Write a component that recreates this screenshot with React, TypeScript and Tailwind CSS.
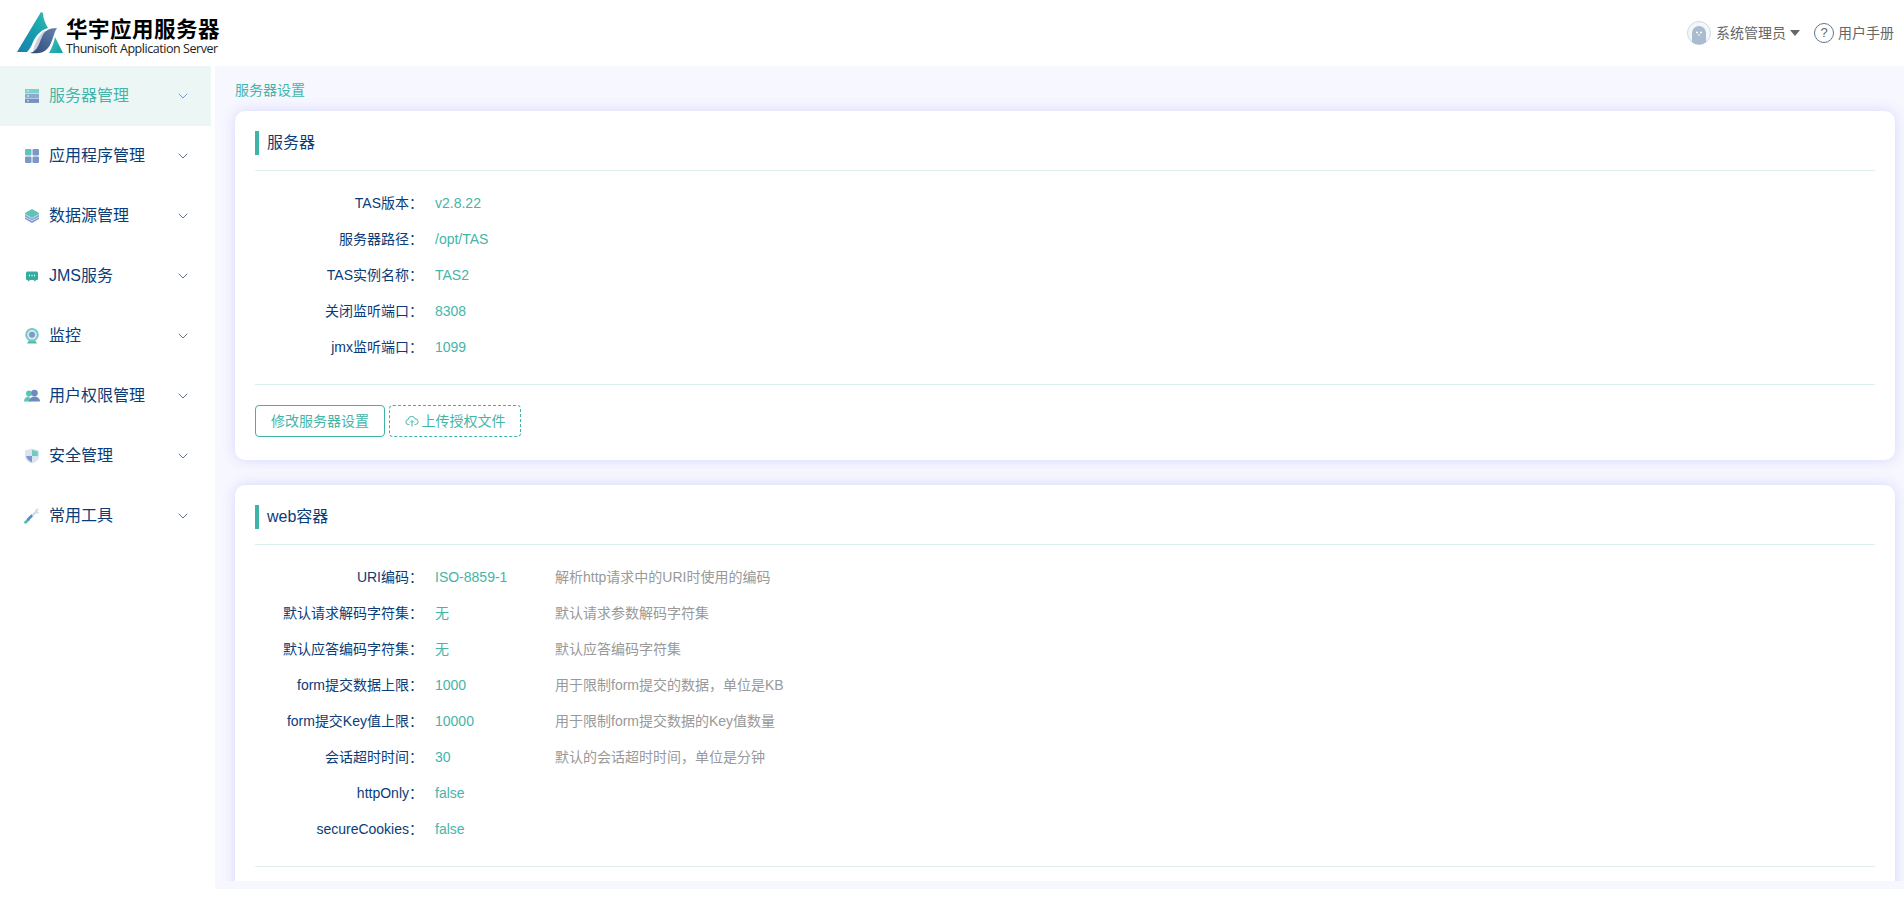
import { ChevronDown } from "lucide-react";

const FONT = "font-['Liberation_Sans','Noto_Sans_CJK_SC',sans-serif]";

const MENU = [
  { label: "服务器管理", icon: "server", active: true },
  { label: "应用程序管理", icon: "apps" },
  { label: "数据源管理", icon: "layers" },
  { label: "JMS服务", icon: "chat" },
  { label: "监控", icon: "camera" },
  { label: "用户权限管理", icon: "users" },
  { label: "安全管理", icon: "shield" },
  { label: "常用工具", icon: "tools" },
];

const SERVER_ROWS = [
  { label: "TAS版本：", value: "v2.8.22" },
  { label: "服务器路径：", value: "/opt/TAS" },
  { label: "TAS实例名称：", value: "TAS2" },
  { label: "关闭监听端口：", value: "8308" },
  { label: "jmx监听端口：", value: "1099" },
];

const WEB_ROWS = [
  { label: "URI编码：", value: "ISO-8859-1", desc: "解析http请求中的URI时使用的编码" },
  { label: "默认请求解码字符集：", value: "无", desc: "默认请求参数解码字符集" },
  { label: "默认应答编码字符集：", value: "无", desc: "默认应答编码字符集" },
  { label: "form提交数据上限：", value: "1000", desc: "用于限制form提交的数据，单位是KB" },
  { label: "form提交Key值上限：", value: "10000", desc: "用于限制form提交数据的Key值数量" },
  { label: "会话超时时间：", value: "30", desc: "默认的会话超时时间，单位是分钟" },
  { label: "httpOnly：", value: "false", desc: "" },
  { label: "secureCookies：", value: "false", desc: "" },
];

function Logo() {
  return (
    <svg width="46" height="46" viewBox="0 0 46 46" className="shrink-0">
      <defs>
        <linearGradient id="lg-a" x1="0" y1="1" x2="1" y2="0">
          <stop offset="0" stopColor="#1b7fb0" />
          <stop offset="0.55" stopColor="#15a0ad" />
          <stop offset="1" stopColor="#35bcb2" />
        </linearGradient>
        <linearGradient id="lg-b" x1="0" y1="1" x2="1" y2="0">
          <stop offset="0" stopColor="#2c4a78" />
          <stop offset="1" stopColor="#6482ab" />
        </linearGradient>
        <linearGradient id="lg-c" x1="0" y1="0" x2="1" y2="1">
          <stop offset="0" stopColor="#45c0b4" />
          <stop offset="1" stopColor="#0f9fa6" />
        </linearGradient>
      </defs>
      <path d="M0 42 L24 2 L26 3 C26 8 28 13 31 18 C24 20 19 25 16 32 C14 37 12 40 10 42 Z" fill="url(#lg-a)" />
      <path d="M38 27 L46 43 L32 43 C35 38 37 32 38 27 Z" fill="url(#lg-c)" />
      <path d="M16 41 C18 35 19 28 27 21 L30 21 C25 26 23 34 20 41 Z" fill="#c9d0e0" />
      <path d="M13 43 C21 41 22 33 25 27 C27 21 32 18 40 18 C36 24 36 32 31 38 C27 43 20 44 13 43 Z" fill="url(#lg-b)" />
    </svg>
  );
}

function MenuIcon({ name }: { name: string }) {
  if (name === "server") {
    return (
      <svg width="16" height="16" viewBox="0 0 16 16">
        <rect x="1" y="1" width="14" height="4.300" fill="#7fd0c6" />
        <rect x="1" y="5.800" width="14" height="4.300" fill="#8fa9d6" />
        <rect x="1" y="10.600" width="14" height="4.300" fill="#7391c2" />
        <path d="M3 3h2M3 8h2M3 12.800h2" stroke="#e8f2f5" strokeWidth="1" />
      </svg>
    );
  }
  if (name === "apps") {
    return (
      <svg width="16" height="16" viewBox="0 0 16 16">
        <rect x="1" y="1" width="6.500" height="6.500" rx="1" fill="#5fc4b8" />
        <rect x="8.500" y="1" width="6.500" height="6.500" rx="1" fill="#7b98c8" />
        <rect x="1" y="8.500" width="6.500" height="6.500" rx="1" fill="#7b98c8" />
        <rect x="8.500" y="8.500" width="6.500" height="6.500" rx="1" fill="#7b98c8" />
      </svg>
    );
  }
  if (name === "layers") {
    return (
      <svg width="16" height="16" viewBox="0 0 16 16">
        <path d="M1 9.500 L8 13 L15 9.500 L15 11 L8 15 L1 11 Z" fill="#7e9bcf" />
        <path d="M1 6.500 L8 10.500 L15 6.500 L15 9 L8 12.500 L1 9 Z" fill="#8ba7d8" />
        <path d="M8 1 L15 5 L15 6 L8 10 L1 6 L1 5 Z" fill="#5fc4b6" />
      </svg>
    );
  }
  if (name === "chat") {
    return (
      <svg width="16" height="16" viewBox="0 0 16 16">
        <path d="M3.500 3.500h9a1.500 1.500 0 0 1 1.500 1.500v6a1 1 0 0 1-1 1h-1l-1 1.500-1.500-1.500H6L4.500 13.500 3.500 12H3a1 1 0 0 1-1-1V5A1.500 1.500 0 0 1 3.500 3.500Z" fill="#35ad9f" />
        <path d="M5 7.500h1M7.500 7.500h1M10 7.500h1" stroke="#ffffff" strokeWidth="1.500" />
      </svg>
    );
  }
  if (name === "camera") {
    return (
      <svg width="16" height="16" viewBox="0 0 16 16">
        <path d="M5.500 11.500 L3 15.500 H13 L10.500 11.500 Z" fill="#4fbcae" />
        <circle cx="8" cy="6.800" r="6.800" fill="#72ccc0" />
        <circle cx="8" cy="6.800" r="4.800" fill="#dce8f2" />
        <circle cx="8" cy="6.800" r="3" fill="#7a9bd0" />
      </svg>
    );
  }
  if (name === "users") {
    return (
      <svg width="16" height="16" viewBox="0 0 16 16">
        <circle cx="5" cy="5.500" r="3" fill="#5fc4b8" />
        <path d="M0 13.500 C0 10 2.500 8.500 5 8.500 L7 13.500 Z" fill="#5fc4b8" />
        <circle cx="10.500" cy="5" r="3.300" fill="#6c8cc0" />
        <path d="M5 13.500 C5 10 8 8.500 10.500 8.500 C13 8.500 16 10 16 13.500 Z" fill="#6c8cc0" />
      </svg>
    );
  }
  if (name === "shield") {
    return (
      <svg width="16" height="16" viewBox="0 0 16 16">
        <path d="M8 0.500 L15 2.500 V8.500 C15 12 11.500 14.500 8 15.500 C4.500 14.500 1 12 1 8.500 V2.500 Z" fill="#dbe5ef" />
        <path d="M8 1.800 L13.800 3.400 V8 H8 Z" fill="#6fcbc0" />
        <path d="M8 8 H2.200 C2.600 11 5 13.200 8 14.300 Z" fill="#7b98c8" />
      </svg>
    );
  }
  return (
    <svg width="16" height="16" viewBox="0 0 16 16">
      <path d="M0.800 15 L5 11" stroke="#4fbca8" strokeWidth="2.500" />
      <path d="M3.500 12 L8.500 7" stroke="#5d86cc" strokeWidth="2.500" />
      <path d="M8 7.500 L12.500 3.500" stroke="#cfd8e2" strokeWidth="2" />
      <path d="M11 2.500 A2.800 2.800 0 0 1 15 1 L13 3.500 L15.500 4 A3 3 0 0 1 11 5 Z" fill="#d4dce6" />
    </svg>
  );
}

function Avatar() {
  return (
    <svg width="24" height="24" viewBox="0 0 24 24">
      <circle cx="12" cy="12" r="11.500" fill="#f4f6f9" stroke="#cfd8e3" />
      <path d="M5 21 V12 A7 7 0 0 1 19 12 V21 A11 11 0 0 1 5 21 Z" fill="#a9bbcf" />
      <circle cx="10" cy="11.500" r="1" fill="#ffffff" />
      <circle cx="14" cy="11.500" r="1" fill="#ffffff" />
      <path d="M11 14h2" stroke="#ffffff" />
    </svg>
  );
}

function InfoRow({ label, value, desc }: { label: string; value: string; desc?: string }) {
  return (
    <div className="flex h-9 items-center text-sm">
      <div className="w-[168px] text-right text-[#0b3c78]">{label}</div>
      <div className="ml-3 w-[120px] text-[#45b5a9]">{value}</div>
      {desc && <div className="text-[#999999]">{desc}</div>}
    </div>
  );
}

function CardTitle({ children }: { children: string }) {
  return (
    <div className="border-b border-[#dcf1ef] pb-[15px]">
      <div className="h-6 border-l-4 border-[#3fb3a6] pl-2 text-base leading-6 text-[#0b3c78]">{children}</div>
    </div>
  );
}

export default function App() {
  return (
    <div className={`flex h-screen flex-col overflow-hidden bg-white ${FONT}`}>
      {/* Top bar */}
      <header className="flex h-[66px] shrink-0 items-center justify-between pl-[17px] pr-[10px]">
        <div className="flex items-center gap-[3px]">
          <Logo />
          <div className="w-[152px] pt-[5px]">
            <div className="font-['Noto_Sans_CJK_SC',sans-serif] text-[21.500px] font-bold leading-[26px] tracking-[0.500px] text-black whitespace-nowrap">
              华宇应用服务器
            </div>
            <div className="font-['Open_Sans',sans-serif] text-[12.500px] leading-[16px] tracking-[-0.450px] text-[#222222] whitespace-nowrap">
              Thunisoft Application Server
            </div>
          </div>
        </div>
        <div className="flex items-center text-sm text-[#666666]">
          <Avatar />
          <span className="ml-[5px]">系统管理员</span>
          <span className="ml-1 h-0 w-0 border-x-[5px] border-t-[6px] border-x-transparent border-t-[#666666]" />
          <span className="ml-[14px] flex h-5 w-5 items-center justify-center rounded-full border border-[#5f7690] text-[13px]">
            ?
          </span>
          <span className="ml-[4px]">用户手册</span>
        </div>
      </header>

      <div className="mb-2 flex min-h-0 flex-1">
        {/* Side menu */}
        <nav className="w-[215px] shrink-0 pr-1">
          {MENU.map(item => (
            <div
              key={item.label}
              className={`flex h-[60px] items-center pl-6 pr-5 ${item.active ? "bg-[#ecf7f5] text-[#45b5a9]" : "text-[#0b3c78]"}`}
            >
              <MenuIcon name={item.icon} />
              <span className="ml-[9px] flex-1 text-base">{item.label}</span>
              <ChevronDown size={16} strokeWidth={1.500} className={item.active ? "text-[#6f9fdb]" : "text-[#5f7690]"} />
            </div>
          ))}
        </nav>

        {/* Content */}
        <main className="flex min-w-0 flex-1 flex-col bg-[#f7f7ff] pb-2">
          <div className="min-h-0 flex-1 overflow-hidden pl-5 pr-[9px]">
            <div className="flex h-[45px] items-center pt-[2px] text-sm text-[#45b5a9]">服务器设置</div>

            <section className="rounded-[10px] bg-white px-5 pt-5 shadow-[0_0_14px_rgba(90,90,240,0.2)]">
              <CardTitle>服务器</CardTitle>
              <div className="mt-[14px] border-b border-[#dcf1ef] pb-[19px]">
                {SERVER_ROWS.map(row => (
                  <InfoRow key={row.label} {...row} />
                ))}
              </div>
              <div className="flex gap-1 pb-[23px] pt-5 text-sm text-[#45b5a9]">
                <button className="h-8 w-[130px] rounded border border-[#3fb3a6]">修改服务器设置</button>
                <button className="flex h-8 w-[132px] items-center justify-center rounded border border-dashed border-[#3fb3a6]">
                  <svg width="14" height="14" viewBox="0 0 14 14" fill="none" stroke="#45b5a9" className="mr-[3px]">
                    <path d="M4.500 10.500H3.500A2.500 2.500 0 0 1 3.200 5.500 3.500 3.500 0 0 1 10 4.800 2.800 2.800 0 0 1 10.500 10.500H9.500" />
                    <path d="M7 12.500V7M5 8.500L7 6.500L9 8.500" />
                  </svg>
                  上传授权文件
                </button>
              </div>
            </section>

            <section className="mt-[25px] rounded-[10px] bg-white px-5 pt-5 shadow-[0_0_14px_rgba(90,90,240,0.2)]">
              <CardTitle>web容器</CardTitle>
              <div className="mt-[14px] border-b border-[#dcf1ef] pb-[19px]">
                {WEB_ROWS.map(row => (
                  <InfoRow key={row.label} {...row} />
                ))}
              </div>
              <div className="h-[60px]" />
            </section>
          </div>
        </main>
      </div>
    </div>
  );
}
